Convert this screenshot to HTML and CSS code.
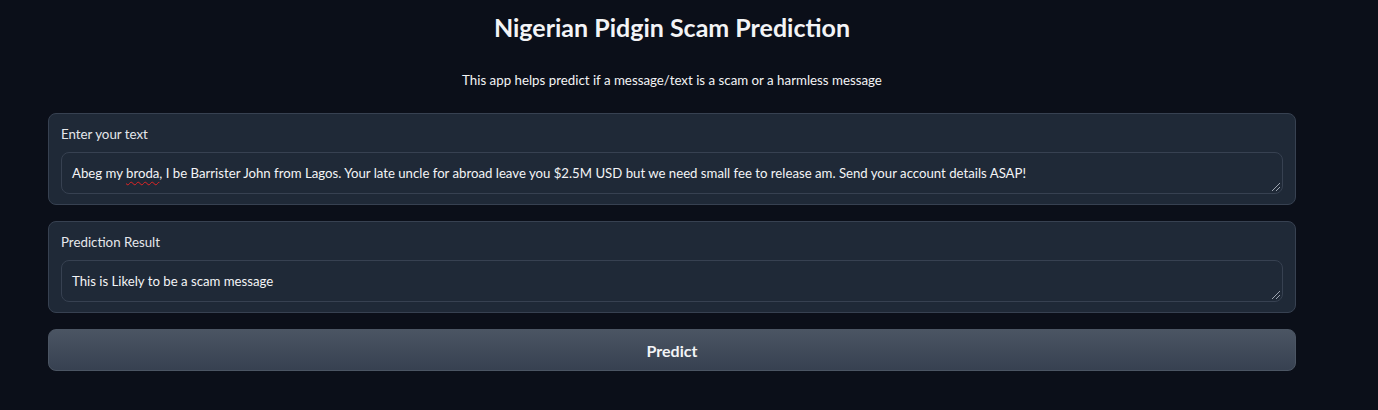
FILE: index.html
```html
<!DOCTYPE html>
<html>
<head>
<meta charset="utf-8">
<link rel="stylesheet" href="styles.css">
</head>
<body>
<div class="app">
  <h1 class="title">Nigerian Pidgin Scam Prediction</h1>
  <p class="subtitle">This app helps predict if a message/text is a scam or a harmless message</p>
  <div class="block">
    <label class="label">Enter your text</label>
    <div class="box"><span>Abeg my <span class="misspelled">broda</span>, I be Barrister John from Lagos. Your late uncle for abroad leave you $2.5M USD but we need small fee to release am. Send your account details ASAP!</span><span class="grip"></span></div>
  </div>
  <div class="block">
    <label class="label">Prediction Result</label>
    <div class="box"><span>This is Likely to be a scam message</span><span class="grip"></span></div>
  </div>
  <button class="btn">Predict</button>
</div>
</body>
</html>
```
FILE: styles.css
```css
* { box-sizing: border-box; }
html, body { margin: 0; padding: 0; background: #0b0f19; }
body { font-family: Lato, "Noto Sans", sans-serif; color: #f3f4f6; }
.app { width: 1248px; margin-left: 48px; display: flex; flex-direction: column; }
.title { margin: 12px 0 0; font-size: 25px; font-weight: 700; text-align: center; line-height: 30px; color: #f3f4f6; }
.subtitle { margin: 28px 0 0; font-size: 13.3px; text-align: center; line-height: 20px; }
.block { margin-top: 16px; background: #1f2937; border: 1px solid #374151; border-radius: 8px; padding: 11px 12px 10px; display: flex; flex-direction: column; }
.block + .block { margin-top: 16px; }
.subtitle + .block { margin-top: 23px; }
.label { font-size: 13.3px; line-height: 18px; color: #e5e7eb; margin-bottom: 9px; }
.box { position: relative; height: 42px; border: 1px solid #374151; border-radius: 8px; padding: 0 10px; font-size: 13.2px; display: flex; align-items: center; background: #1f2937; color: #f3f4f6; }
.misspelled { text-decoration: underline wavy #e02424; text-underline-offset: 3px; text-decoration-thickness: 1px; }
.grip { position: absolute; right: 2px; bottom: 2px; width: 8px; height: 8px; background: linear-gradient(135deg, transparent 45%, #9ca3af 45%, #9ca3af 52%, transparent 52%, transparent 70%, #9ca3af 70%, #9ca3af 77%, transparent 77%); }
.btn { margin-top: 16px; height: 42px; border: 1px solid #4b5563; border-radius: 8px; background: linear-gradient(to bottom, #4b5563, #374151); color: #f3f4f6; font-family: inherit; font-size: 16px; font-weight: 700; }
```
